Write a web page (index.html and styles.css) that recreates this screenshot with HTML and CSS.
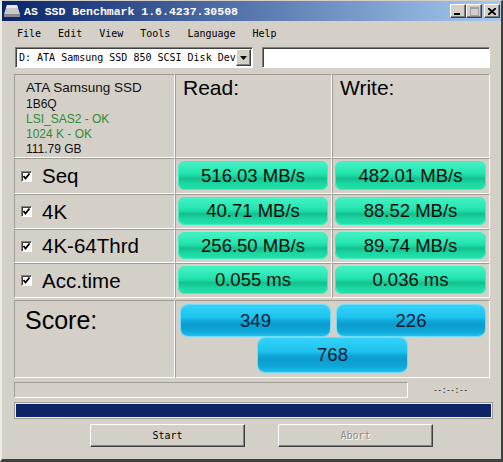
FILE: index.html
```html
<!DOCTYPE html>
<html lang="en">
<head>
  <meta charset="UTF-8">
  <title>AS SSD Benchmark</title>
  <link rel="stylesheet" href="styles.css">
</head>
<body>
  <div class="window">
    <div class="titlebar">
      <svg class="title-icon" width="16" height="14" viewBox="0 0 16 14">
        <polygon points="3,1 13,1 16,10 0,10" fill="#c8c8c8"/>
        <polygon points="3,1 13,1 14,4 2,4" fill="#e8e8e8"/>
        <rect x="0" y="10" width="16" height="3" fill="#8a8a8a"/>
      </svg>
      <span class="title">AS SSD Benchmark 1.6.4237.30508</span>
      <div class="caption-btns">
        <span class="cap-btn"><svg width="8" height="8" viewBox="0 0 8 8"><rect x="0" y="6" width="6" height="2" fill="#000"/></svg></span>
        <span class="cap-btn"><svg width="9" height="9" viewBox="0 0 9 9"><rect x="0.5" y="0.5" width="8" height="8" fill="none" stroke="#a0a0a0"/><rect x="0" y="0" width="9" height="2" fill="#a0a0a0"/></svg></span>
        <span class="cap-btn close"><svg width="8" height="7" viewBox="0 0 8 7"><path d="M0 0 L8 7 M8 0 L0 7" stroke="#000" stroke-width="1.8"/></svg></span>
      </div>
    </div>

    <div class="menubar">
      <span>File</span>
      <span>Edit</span>
      <span>View</span>
      <span>Tools</span>
      <span>Language</span>
      <span>Help</span>
    </div>

    <div class="toolbar">
      <div class="combo">
        <span class="combo-text">D: ATA Samsung SSD 850 SCSI Disk Dev</span>
        <span class="combo-arrow"><svg width="7" height="4" viewBox="0 0 7 4"><polygon points="0,0 7,0 3.5,4" fill="#000"/></svg></span>
      </div>
      <div class="textbox"></div>
    </div>

    <div class="results">
      <div class="cell info">
        <div class="drive-name">ATA Samsung SSD</div>
        <div>1B6Q</div>
        <div class="ok">LSI_SAS2 - OK</div>
        <div class="ok">1024 K - OK</div>
        <div>111.79 GB</div>
      </div>
      <div class="cell head">Read:</div>
      <div class="cell head">Write:</div>

      <div class="cell label"><span class="check"></span>Seq</div>
      <div class="cell value"><div class="bar">516.03 MB/s</div></div>
      <div class="cell value"><div class="bar">482.01 MB/s</div></div>

      <div class="cell label"><span class="check"></span>4K</div>
      <div class="cell value"><div class="bar">40.71 MB/s</div></div>
      <div class="cell value"><div class="bar">88.52 MB/s</div></div>

      <div class="cell label"><span class="check"></span>4K-64Thrd</div>
      <div class="cell value"><div class="bar">256.50 MB/s</div></div>
      <div class="cell value"><div class="bar">89.74 MB/s</div></div>

      <div class="cell label"><span class="check"></span>Acc.time</div>
      <div class="cell value"><div class="bar">0.055 ms</div></div>
      <div class="cell value"><div class="bar">0.036 ms</div></div>
    </div>

    <div class="score">
      <div class="cell score-label">Score:</div>
      <div class="cell score-values">
        <div class="score-bar">349</div>
        <div class="score-bar">226</div>
        <div class="score-bar total">768</div>
      </div>
    </div>

    <div class="status">
      <div class="progress-box"></div>
      <span class="time">--:--:--</span>
    </div>

    <div class="progress-bar"></div>

    <div class="buttons">
      <button class="btn">Start</button>
      <button class="btn" disabled>Abort</button>
    </div>
  </div>
</body>
</html>
```

FILE: styles.css
```css
* {
  box-sizing: border-box;
}

body {
  margin: 0;
  background-color: #d4d0c8;
  font-family: "Liberation Sans", Arial, sans-serif;
}

.window {
  width: 503px;
  height: 462px;
  background-color: #d4d0c8;
  border-style: solid;
  border-width: 1px 2px 3px 2px;
  border-color: #d4d0c8 #404040 #404040 #ecebe6;
  display: flex;
  flex-direction: column;
}

.titlebar {
  height: 20px;
  flex-shrink: 0;
  background: linear-gradient(to right, #0a246a, #a6caf0);
  display: flex;
  align-items: center;
  padding: 0 1px 0 2px;
}

.title-icon {
  margin-right: 4px;
}

.title {
  flex: 1;
  color: #ffffff;
  font: bold 11.5px "Liberation Mono", monospace;
}

.caption-btns {
  display: flex;
}

.cap-btn {
  width: 16px;
  height: 14px;
  background: #d4d0c8;
  border: 1px solid;
  border-color: #ffffff #404040 #404040 #ffffff;
  box-shadow: inset -1px -1px #808080;
  display: flex;
  align-items: center;
  justify-content: center;
}

.cap-btn.close {
  margin-left: 2px;
}

.menubar {
  height: 23px;
  flex-shrink: 0;
  display: flex;
  align-items: center;
  gap: 17px;
  padding-left: 15px;
  padding-top: 2px;
  font: 10px "DejaVu Sans Mono", monospace;
  color: #000;
}

.toolbar {
  display: flex;
  height: 21px;
  margin-top: 3px;
  padding-left: 13px;
  gap: 9px;
}

.combo {
  width: 238px;
  background: #ffffff;
  border: 1px solid;
  border-color: #808080 #ffffff #ffffff #808080;
  box-shadow: inset 1px 1px #404040;
  display: flex;
  align-items: center;
  padding: 1px 1px 1px 3px;
}

.combo-text {
  flex: 1;
  font: 10px "DejaVu Sans Mono", monospace;
  white-space: nowrap;
  overflow: hidden;
}

.combo-arrow {
  width: 15px;
  height: 17px;
  background: #d4d0c8;
  border: 1px solid;
  border-color: #ffffff #404040 #404040 #ffffff;
  box-shadow: inset -1px -1px #808080;
  display: flex;
  align-items: center;
  justify-content: center;
}

.textbox {
  width: 228px;
  background: #ffffff;
  border: 1px solid;
  border-color: #808080 #ffffff #ffffff #808080;
  box-shadow: inset 1px 1px #404040;
}

.results {
  display: grid;
  grid-template-columns: 161px 157px 158px;
  grid-template-rows: 84px 36px 35px 34px 35px;
  margin-top: 6px;
  margin-left: 12px;
  width: 476px;
}

.cell {
  border: 1px solid;
  border-color: #a09c94 #ffffff #ffffff #a09c94;
}

.info {
  padding: 4px 0 0 11px;
  font-size: 12px;
  line-height: 15px;
  color: #111;
}

.drive-name {
  font-size: 13.5px;
  line-height: 17px;
  margin-bottom: 1px;
}

.ok {
  color: #2f8a32;
}

.head {
  padding: 0 0 0 7px;
  font-size: 21px;
  line-height: 26px;
  color: #000;
}

.label {
  display: flex;
  align-items: center;
  padding-left: 6px;
  font-size: 20.5px;
  color: #000;
}

.check {
  width: 11px;
  height: 11px;
  margin-right: 10px;
  background: #fff url("data:image/svg+xml,%3Csvg xmlns='http://www.w3.org/2000/svg' width='9' height='9'%3E%3Cpath d='M1.5 4 L3.5 6.5 L7.5 1.5' fill='none' stroke='%23000' stroke-width='1.8'/%3E%3C/svg%3E") center no-repeat;
  border: 1px solid;
  border-color: #808080 #ffffff #ffffff #808080;
  box-shadow: inset 1px 1px #404040;
}

.value {
  padding: 2px 3px 3px 2px;
}

.bar {
  height: 100%;
  border-radius: 7px;
  background: linear-gradient(to bottom, #48f2c6 0%, #26e6b0 40%, #1bd8a2 52%, #13bf8e 60%, #1bd7a0 78%, #24e3ac 100%);
  box-shadow: inset 0 0 0 1px #3cf0c0;
  display: flex;
  align-items: center;
  justify-content: center;
  font-size: 18.5px;
  color: #0c0c0c;
}

.score {
  display: grid;
  grid-template-columns: 161px 315px;
  height: 78px;
  margin-top: 2px;
  margin-left: 12px;
  width: 476px;
}

.score-label {
  padding: 5px 0 0 10px;
  font-size: 25px;
  line-height: 28px;
  color: #000;
}

.score-values {
  display: grid;
  grid-template-columns: 149px 148px;
  grid-template-rows: 31px 34px;
  column-gap: 7px;
  row-gap: 2px;
  padding: 4px 0 0 5px;
}

.score-bar {
  border-radius: 7px;
  background: linear-gradient(to bottom, #34d2f8 0%, #1cc2ee 40%, #0ea8da 52%, #0b9ccc 62%, #0ea8d8 85%, #20bfee 100%);
  box-shadow: 0 0 0 1px #6edcf8;
  display: flex;
  align-items: center;
  justify-content: center;
  font-size: 18.5px;
  color: #0c1a36;
}

.score-bar.total {
  grid-column: 1 / span 2;
  justify-self: center;
  width: 149px;
  margin-left: -1px;
}

.status {
  display: flex;
  align-items: center;
  height: 16px;
  margin-top: 4px;
  padding-left: 12px;
}

.progress-box {
  width: 394px;
  height: 16px;
  border: 1px solid;
  border-color: #a09c94 #ffffff #ffffff #a09c94;
}

.time {
  margin-left: 25px;
  font: 8px "DejaVu Sans Mono", monospace;
  letter-spacing: -0.5px;
  color: #222;
}

.progress-bar {
  height: 15px;
  margin: 5px 9px 0 13px;
  background: #0c2466;
  border: 1px solid #e8eef8;
  box-shadow: 0 0 0 1px #a09c94;
}

.buttons {
  display: flex;
  gap: 33px;
  margin-top: 6px;
  padding-left: 88px;
}

.btn {
  width: 155px;
  height: 23px;
  background: #d4d0c8;
  border: 1px solid;
  border-color: #ffffff #404040 #404040 #ffffff;
  box-shadow: inset -1px -1px #808080;
  font: 10px "DejaVu Sans Mono", monospace;
  color: #000;
  padding: 0;
}

.btn:disabled {
  color: #8c8a84;
  text-shadow: 1px 1px #ffffff;
}
```
